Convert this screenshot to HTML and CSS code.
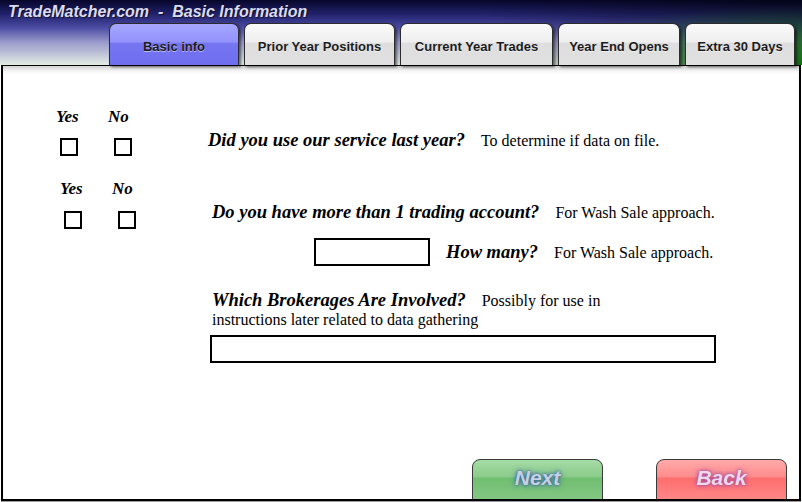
FILE: index.html
```html
<!DOCTYPE html>
<html>

<head>
    <meta charset="UTF-8">
    <title>TradeMatcher.com - Basic Information</title>
    <link rel="stylesheet" href="styles.css">
</head>

<body>
    <div class="screen">
        <header class="masthead">
            <div class="site-title">TradeMatcher.com  -  Basic Information</div>
            <nav class="tabs">
                <a class="tab tab-active" id="tab-basic">Basic info</a>
                <a class="tab" id="tab-prior">Prior Year Positions</a>
                <a class="tab" id="tab-current">Current Year Trades</a>
                <a class="tab" id="tab-opens">Year End Opens</a>
                <a class="tab" id="tab-extra">Extra 30 Days</a>
            </nav>
        </header>

        <main class="panel">
            <div class="row row-service">
                <div class="yesno">
                    <div class="yesno-labels"><span>Yes</span><span>No</span></div>
                    <div class="yesno-boxes"><input type="checkbox"><input type="checkbox"></div>
                </div>
                <p class="question">Did you use our service last year?<span class="note">To determine if data on file.</span></p>
            </div>

            <div class="row row-accounts">
                <div class="yesno">
                    <div class="yesno-labels"><span>Yes</span><span>No</span></div>
                    <div class="yesno-boxes"><input type="checkbox"><input type="checkbox"></div>
                </div>
                <p class="question">Do you have more than 1 trading account?<span class="note">For Wash Sale approach.</span></p>
            </div>

            <div class="row row-count">
                <input type="text" class="field field-count">
                <p class="question">How many?<span class="note">For Wash Sale approach.</span></p>
            </div>

            <div class="brokerages">
                <p class="question question-wrap">Which Brokerages Are Involved?<span class="note">Possibly for use in</span><br><span class="note note-line">instructions later related to data gathering</span></p>
                <input type="text" class="field field-brokers">
            </div>

            <div class="actions">
                <button class="btn btn-next">Next</button>
                <button class="btn btn-back">Back</button>
            </div>
        </main>
    </div>
</body>

</html>
```

FILE: styles.css
```css
body {
    margin: 0;
    background-color: #ffffff;
    font-family: "Liberation Serif", "Times New Roman", serif;
}

.screen {
    width: 802px;
    height: 502px;
    overflow: hidden;
}

/* header with title and tabs */
.masthead {
    height: 65px;
    box-sizing: border-box;
    padding-top: 2px;
    background-image:
        radial-gradient(ellipse 260px 60px at 100% 100%, rgba(14, 110, 14, 0.95) 0%, rgba(20, 110, 20, 0.6) 45%, rgba(20, 100, 20, 0) 100%),
        linear-gradient(to right, rgba(0, 0, 0, 0) 60%, rgba(0, 0, 0, 0.45) 100%),
        linear-gradient(to bottom, #06062a 0%, #22226c 22%, #4a4aa2 42%, #9a9acc 65%, #e2ece2 100%);
}

.site-title {
    padding-left: 8px;
    height: 20px;
    line-height: 20px;
    font-family: "Liberation Sans", Arial, sans-serif;
    font-size: 16px;
    font-weight: bold;
    font-style: italic;
    color: #dcdcf0;
    white-space: pre;
    text-shadow: 1px 1px 1px rgba(0, 0, 0, 0.6);
}

.tabs {
    display: flex;
    gap: 5px;
    margin-top: 1px;
    margin-left: 109px;
}

.tab {
    height: 42px;
    box-sizing: border-box;
    padding-top: 3px;
    line-height: 39px;
    text-align: center;
    border: 1px solid #2c2c2c;
    border-bottom: 0;
    border-radius: 7px 7px 0 0;
    background-image: linear-gradient(to bottom, #fafafa 0%, #eeeeee 44%, #dedede 47%, #e0e0e0 100%);
    box-shadow: 2px 2px 3px rgba(0, 0, 0, 0.55);
    font-family: "Liberation Sans", Arial, sans-serif;
    font-size: 13px;
    font-weight: bold;
    color: #1c1c1c;
    text-shadow: 0 1px 0 rgba(255, 255, 255, 0.5);
    cursor: pointer;
}

.tab-active {
    background-image: linear-gradient(to bottom, #a6a6ff 0%, #9292fc 44%, #7676f2 47%, #6e6ef0 100%);
}

#tab-basic {
    width: 130px;
}

#tab-prior {
    width: 151px;
}

#tab-current {
    width: 153px;
}

#tab-opens {
    width: 122px;
}

#tab-extra {
    width: 110px;
}

/* main form area */
.panel {
    display: flex;
    flex-direction: column;
    width: 800px;
    height: 436px;
    box-sizing: border-box;
    margin-left: 1px;
    padding-top: 41px;
    border: 2px solid #000000;
    border-top: 1px solid #000000;
    background-color: #ffffff;
    box-shadow: inset 0 6px 6px -4px rgba(0, 0, 0, 0.25), 0 1px 0 #9a9a9a;
    overflow: hidden;
}

.row {
    display: flex;
    align-items: flex-start;
}

.row-accounts {
    margin-top: 23px;
}

.row-count {
    margin-top: 9px;
}

.yesno {
    width: 152px;
    margin-left: 53px;
}

.row-accounts .yesno {
    margin-left: 57px;
}

.yesno-labels {
    display: flex;
    height: 20px;
    line-height: 20px;
    font-size: 17px;
    font-weight: bold;
    font-style: italic;
}

.yesno-labels span {
    width: 52px;
}

.yesno-boxes {
    display: flex;
    gap: 36px;
    margin-top: 11px;
    margin-left: 4px;
}

.row-accounts .yesno-boxes {
    margin-top: 12px;
}

.yesno-boxes input {
    appearance: none;
    width: 18px;
    height: 18px;
    box-sizing: border-box;
    margin: 0;
    border: 2px solid #000000;
    background-color: #ffffff;
}

.question {
    margin: 22px 0 0 0;
    line-height: 22px;
    font-size: 18.5px;
    font-weight: bold;
    font-style: italic;
    color: #000000;
    white-space: nowrap;
}

.note {
    margin-left: 16px;
    font-size: 16px;
    font-weight: normal;
    font-style: normal;
}

.row-count .question {
    margin-top: 3px;
    margin-left: 16px;
}

.field {
    height: 28px;
    box-sizing: border-box;
    margin: 0;
    border: 2px solid #000000;
    border-radius: 0;
    background-color: #ffffff;
}

.field-count {
    width: 116px;
    margin-left: 311px;
}

.brokerages {
    margin-top: 25px;
}

.question-wrap {
    margin: 0 0 0 209px;
    line-height: 18px;
}

.note-line {
    margin-left: 0;
}

.field-brokers {
    display: block;
    width: 506px;
    margin-top: 6px;
    margin-left: 207px;
}

/* buttons at the bottom */
.actions {
    display: flex;
    gap: 53px;
    margin-top: auto;
    margin-bottom: -4px;
    padding-left: 469px;
}

.btn {
    width: 131px;
    height: 44px;
    box-sizing: border-box;
    padding: 0 0 6px 0;
    border: 1px solid #3a3a3a;
    border-radius: 8px 8px 0 0;
    font-family: "Liberation Sans", Arial, sans-serif;
    font-size: 21px;
    font-weight: bold;
    font-style: italic;
    cursor: pointer;
}

.btn-next {
    background-image: linear-gradient(to bottom, #a6dca6 0%, #8acc8a 40%, #70be70 43%, #86c886 100%);
    color: #c4d0e4;
    text-shadow: 0 0 3px #3a5a9a, 0 0 6px #3a6aa0;
}

.btn-back {
    background-image: linear-gradient(to bottom, #ffaaaa 0%, #ff8c8c 40%, #ff6e6e 43%, #ff8a8a 100%);
    color: #f0d8ec;
    text-shadow: 0 0 3px #9a4a9a, 0 0 6px #a04aa0;
}
```
